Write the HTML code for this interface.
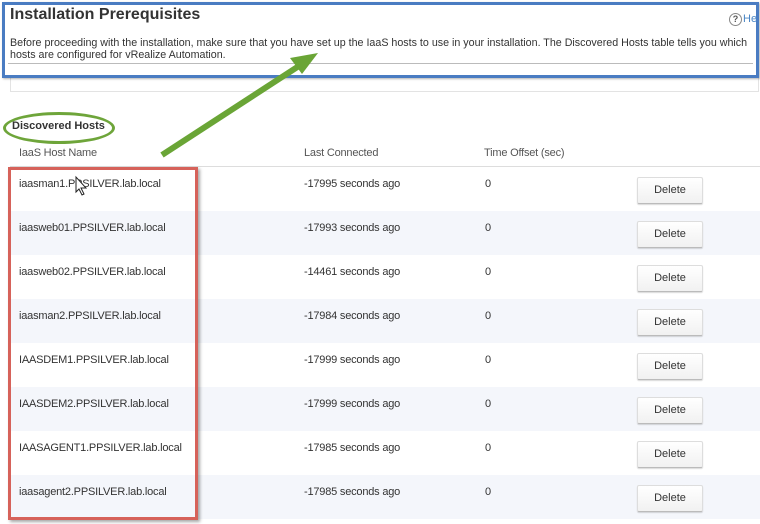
<!DOCTYPE html>
<html><head><style>
body{margin:0;width:760px;height:524px;background:#fff;font-family:"Liberation Sans",sans-serif;position:relative;overflow:hidden;color:#333}
.a{position:absolute}
.t{font-size:11px;letter-spacing:-0.2px}
.stripe{position:absolute;left:10px;width:750px;height:44px;background:#f4f6fb}
.btn{position:absolute;left:637px;width:64px;height:25px;border:1px solid #ddd;border-bottom-color:#bbb;border-radius:2px;background:linear-gradient(#fff,#f1f1f1);font-size:11px;text-align:center;line-height:25px;box-shadow:0 1px 1px rgba(0,0,0,.15)}
</style></head><body>
<div class="a" style="left:10px;top:77px;width:747px;height:14px;border:1px solid #e3e3e3;border-top:none"></div>
<div class="a" style="left:2px;top:2px;width:751px;height:70px;border:3px solid #4a7cc2;box-shadow:1px 1px 2px rgba(0,0,0,.3);background:#fff"></div>
<div class="a" style="left:10px;top:6px;font-size:16px;font-weight:bold;color:#333">Installation Prerequisites</div>
<div class="a" style="left:10px;top:37px;width:760px;line-height:12px;font-size:10.7px;letter-spacing:0;white-space:nowrap">Before proceeding with the installation, make sure that you have set up the IaaS hosts to use in your installation. The Discovered Hosts table tells you which<br>hosts are configured for vRealize Automation.</div>
<div class="a" style="left:8px;top:63px;width:745px;height:1px;background:#bbb"></div>
<div class="a" style="left:729px;top:13px;width:11px;height:11px;border:1px solid #888;border-radius:50%;font-size:9px;text-align:center;line-height:11px;font-weight:bold;color:#555">?</div>
<div class="a" style="left:743px;top:13px;font-size:11px;color:#4a86c5">He</div>
<div class="a" style="left:3px;top:112px;width:106px;height:26px;border:3px solid #6ea53a;border-radius:50%"></div>
<div class="a" style="left:12px;top:120px;font-size:11px;font-weight:bold;color:#333">Discovered Hosts</div>
<div class="a t" style="left:19px;top:147px;color:#555">IaaS Host Name</div>
<div class="a t" style="left:304px;top:147px;color:#555">Last Connected</div>
<div class="a t" style="left:484px;top:147px;color:#555">Time Offset (sec)</div>
<div class="a" style="left:10px;top:166px;width:750px;height:1px;background:#ddd"></div>
<div class="stripe" style="top:211px"></div>
<div class="stripe" style="top:299px"></div>
<div class="stripe" style="top:387px"></div>
<div class="stripe" style="top:475px"></div>
<div class="a t" style="left:19px;top:178px">iaasman1.PPSILVER.lab.local</div>
<div class="a t" style="left:19px;top:222px">iaasweb01.PPSILVER.lab.local</div>
<div class="a t" style="left:19px;top:266px">iaasweb02.PPSILVER.lab.local</div>
<div class="a t" style="left:19px;top:310px">iaasman2.PPSILVER.lab.local</div>
<div class="a t" style="left:19px;top:354px">IAASDEM1.PPSILVER.lab.local</div>
<div class="a t" style="left:19px;top:398px">IAASDEM2.PPSILVER.lab.local</div>
<div class="a t" style="left:19px;top:442px">IAASAGENT1.PPSILVER.lab.local</div>
<div class="a t" style="left:19px;top:486px">iaasagent2.PPSILVER.lab.local</div>
<div class="a t" style="left:304px;top:178px">-17995 seconds ago</div>
<div class="a t" style="left:304px;top:222px">-17993 seconds ago</div>
<div class="a t" style="left:304px;top:266px">-14461 seconds ago</div>
<div class="a t" style="left:304px;top:310px">-17984 seconds ago</div>
<div class="a t" style="left:304px;top:354px">-17999 seconds ago</div>
<div class="a t" style="left:304px;top:398px">-17999 seconds ago</div>
<div class="a t" style="left:304px;top:442px">-17985 seconds ago</div>
<div class="a t" style="left:304px;top:486px">-17985 seconds ago</div>
<div class="a t" style="left:485px;top:178px">0</div>
<div class="a t" style="left:485px;top:222px">0</div>
<div class="a t" style="left:485px;top:266px">0</div>
<div class="a t" style="left:485px;top:310px">0</div>
<div class="a t" style="left:485px;top:354px">0</div>
<div class="a t" style="left:485px;top:398px">0</div>
<div class="a t" style="left:485px;top:442px">0</div>
<div class="a t" style="left:485px;top:486px">0</div>
<div class="btn" style="top:177px">Delete</div>
<div class="btn" style="top:221px">Delete</div>
<div class="btn" style="top:265px">Delete</div>
<div class="btn" style="top:309px">Delete</div>
<div class="btn" style="top:353px">Delete</div>
<div class="btn" style="top:397px">Delete</div>
<div class="btn" style="top:441px">Delete</div>
<div class="btn" style="top:485px">Delete</div>
<div class="a" style="left:8px;top:167px;width:184px;height:347px;border:3px solid #d6625a;box-shadow:2px 2px 3px rgba(0,0,0,.35)"></div>
<svg class="a" style="left:0;top:0" width="760" height="524"><line x1="162" y1="155" x2="302" y2="64" stroke="#6aa536" stroke-width="6"/><polygon points="318,53 290,58 302,74" fill="#6aa536"/>
<path d="M76 177 L76 192 L79 189 L82 195 L84 194 L81 188 L86 188 Z" fill="#fff" stroke="#222" stroke-width="1"/></svg>
</body></html>
